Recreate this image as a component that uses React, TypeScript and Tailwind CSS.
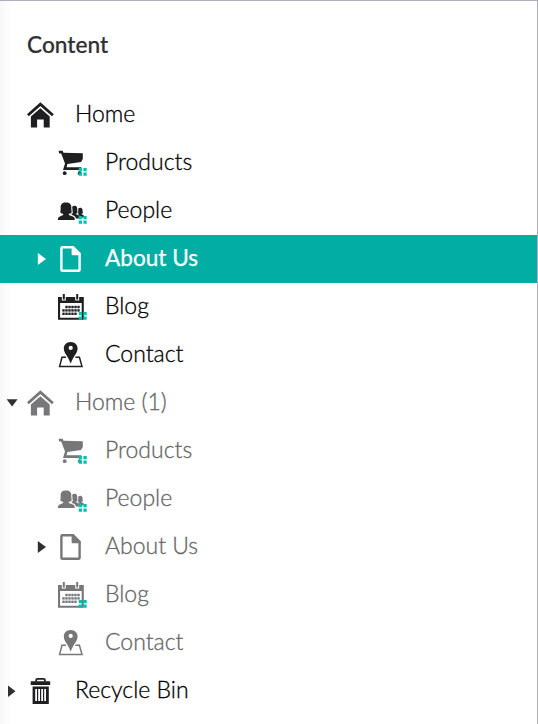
import type { ReactNode } from "react";

type IconName = "home" | "cart" | "people" | "doc" | "calendar" | "pin" | "trash";

type Node = {
  label: string;
  icon: IconName;
  level: 0 | 1;
  caret?: "right" | "down";
  state?: "active" | "muted";
  badge?: boolean;
};

const nodes: Node[] = [
  { label: "Home", icon: "home", level: 0 },
  { label: "Products", icon: "cart", level: 1, badge: true },
  { label: "People", icon: "people", level: 1, badge: true },
  { label: "About Us", icon: "doc", level: 1, caret: "right", state: "active" },
  { label: "Blog", icon: "calendar", level: 1, badge: true },
  { label: "Contact", icon: "pin", level: 1 },
  { label: "Home (1)", icon: "home", level: 0, caret: "down", state: "muted" },
  { label: "Products", icon: "cart", level: 1, badge: true, state: "muted" },
  { label: "People", icon: "people", level: 1, badge: true, state: "muted" },
  { label: "About Us", icon: "doc", level: 1, caret: "right", state: "muted" },
  { label: "Blog", icon: "calendar", level: 1, badge: true, state: "muted" },
  { label: "Contact", icon: "pin", level: 1, state: "muted" },
  { label: "Recycle Bin", icon: "trash", level: 0, caret: "right" },
];

const dots: [number, number][] = [
  ...[10.5, 13.5, 16.5, 19.5, 22.5].map((x): [number, number] => [x, 16]),
  ...[7.5, 10.5, 13.5, 16.5, 19.5, 22.5].map((x): [number, number] => [x, 19.4]),
  ...[7.5, 10.5, 13.5, 16.5, 19.5].map((x): [number, number] => [x, 22.8]),
];

const glyphs: Record<IconName, ReactNode> = {
  home: (
    <>
      <path d="M3.9 16.2 16.4 5.1 28.9 16.2" fill="none" stroke="currentColor" strokeWidth="2.8" />
      <path d="M16.4 9.2 25.7 17.5V28.5H19.7V20.4H13.1V28.5H6.9V17.5Z" />
    </>
  ),
  cart: (
    <>
      <path d="M2.6 3.7H6.6L7.5 5.7 26.8 6.2V12L25 14.9 11.4 17.1 10.6 20.3H25.4V23H7L9 16.6 5.2 6.4H3.2Z" />
      <circle cx="8.7" cy="26.2" r="1.9" />
      <circle cx="23.7" cy="26.2" r="1.9" />
    </>
  ),
  people: (
    <>
      <path d="M10 7.6C13.9 7.6 15.6 9.6 15.3 12.8 15.2 15.2 15.8 16.2 15.6 17.6 14.8 18.9 13 18.6 12.8 19V20L17.4 21.8C18.5 22.4 18.8 23.4 18.8 25H1.9C1.9 23.4 2.2 22.4 3.3 21.8L7.2 20V19C7 18.6 5.2 18.9 4.4 17.6 4.2 16.2 4.8 15.2 4.7 12.8 4.4 9.6 6.1 7.6 10 7.6Z" />
      <path d="M16.2 11.8C17.2 10.4 19.8 10.3 20.9 12 21.6 13.6 20.9 15.6 21.6 17.4 21.1 18.4 20.2 18.2 20.2 18.8V19.2L23 20.4V23.6H20C19.6 21.4 18.4 20.8 15.6 19.8V18.6H16.8Z" />
      <path d="M22.3 13.5C23.4 12.2 25.8 12.4 26.4 14.2 26.8 15.6 26.4 16.8 27 18 26.4 18.8 25.4 18.5 25.4 19L27.8 20.4V22.4H24.4L22.2 19Z" />
    </>
  ),
  doc: (
    <>
      <path d="M16.5 4.2H6.4Q5.4 4.2 5.4 5.2V26.8Q5.4 27.8 6.4 27.8H22.6Q23.6 27.8 23.6 26.8V11" fill="none" stroke="currentColor" strokeWidth="2.4" />
      <path d="M15.6 3H17.6L24.8 10.2V12.2H16.6Q15.6 12.2 15.6 11.2Z" />
    </>
  ),
  calendar: (
    <>
      <path fillRule="evenodd" d="M2 5.9H5.8V9.6H9.8V5.9H19.2V9.6H23.2V5.9H27.8V28.8H2ZM4.1 12V26.7H25.7V12Z" />
      <path d="M7.8 3V8.4M21.2 3V8.4" fill="none" stroke="currentColor" strokeWidth="2" />
      {dots.map(([x, y]) => (
        <rect key={`${x}-${y}`} x={x - 1.2} y={y - 1.2} width="2.4" height="2.4" />
      ))}
    </>
  ),
  pin: (
    <>
      <path fillRule="evenodd" d="M14.7 2.9C18.8 2.9 21.6 5.8 21.6 9.4 21.6 14.2 16.6 17.8 14.7 24.8 12.8 17.8 7.8 14.2 7.8 9.4 7.8 5.8 10.6 2.9 14.7 2.9ZM14.7 6.8A2.1 2.1 0 1 0 14.7 11 2.1 2.1 0 1 0 14.7 6.8Z" />
      <path d="M10 18.3H6L3.6 27.4H26L23.4 18.3H19.4" fill="none" stroke="currentColor" strokeWidth="1.5" />
    </>
  ),
  trash: (
    <>
      <path d="M12.2 6.6V5Q12.2 3.8 13.4 3.8H19.7Q20.9 3.8 20.9 5V6.6" fill="none" stroke="currentColor" strokeWidth="1.8" />
      <rect x="6.7" y="6.2" width="19.5" height="3.8" rx="0.6" />
      <path fillRule="evenodd" d="M8.6 11.4H24.8V29H8.6ZM11.2 14V26H13V14ZM14.2 14V26H16V14ZM17.2 14V26H19V14ZM20.2 14V26H22V14Z" />
    </>
  ),
};

function Icon({ name, badge }: { name: IconName; badge?: boolean }) {
  return (
    <svg viewBox="0 0 32 32" className="size-8 shrink-0" fill="currentColor">
      {glyphs[name]}
      {badge && <path fill="#04bfb2" d="M22.7 21H26V24.3H22.7ZM27.4 21H30.7V24.3H27.4ZM22.7 25.5H26V28.8H22.7ZM27.4 25.5H30.7V28.8H27.4Z" />}
    </svg>
  );
}

function Caret({ kind, active, level }: { kind?: "right" | "down"; active: boolean; level: 0 | 1 }) {
  const right = level === 1 ? "M5.8 10 14 16 5.8 22Z" : "M8 10.4 15.5 16.2 8 22Z";
  return (
    <svg viewBox="0 0 24 32" className={`h-8 w-6 shrink-0 ${active ? "text-white" : "text-[#303033]"}`} fill="currentColor">
      {kind === "right" && <path d={right} />}
      {kind === "down" && <path d="M6.6 12.3H17.6L12.1 19.6Z" />}
    </svg>
  );
}

function Row({ node }: { node: Node }) {
  const active = node.state === "active";
  const tone = active ? "bg-[#02aea3] text-white" : node.state === "muted" ? "text-[#77777a]" : "text-[#1f1e21]";
  const label = active
    ? "pb-[3px] font-normal text-[22.6px] text-white [-webkit-text-stroke:0.25px]"
    : node.state === "muted"
      ? "pb-1 font-light text-[23px] text-[#666666] [-webkit-text-stroke:0.3px]"
      : "pb-1 font-light text-[23px] text-black [-webkit-text-stroke:0.3px]";
  return (
    <li className={`flex h-12 items-center ${tone} ${node.level === 1 ? "pl-8" : ""}`}>
      <Caret kind={node.caret} active={active} level={node.level} />
      <Icon name={node.icon} badge={node.badge} />
      <span className={`leading-8 ${node.level === 1 ? "pl-[17px]" : "pl-[19px]"} ${label}`}>{node.label}</span>
    </li>
  );
}

export default function App() {
  return (
    <div className="h-[724px] w-[538px] overflow-hidden border-t border-r border-[#b0adbd] bg-white bg-[linear-gradient(to_right,#f8f8f8,#ffffff_12px)] font-['Lato',sans-serif]">
      <h1 className="flex h-[90px] items-center pb-px pl-[27px] text-[22.7px] font-medium text-[#303033] [-webkit-text-stroke:0.2px]">Content</h1>
      <ul>
        {nodes.map((node, i) => (
          <Row key={i} node={node} />
        ))}
      </ul>
    </div>
  );
}
